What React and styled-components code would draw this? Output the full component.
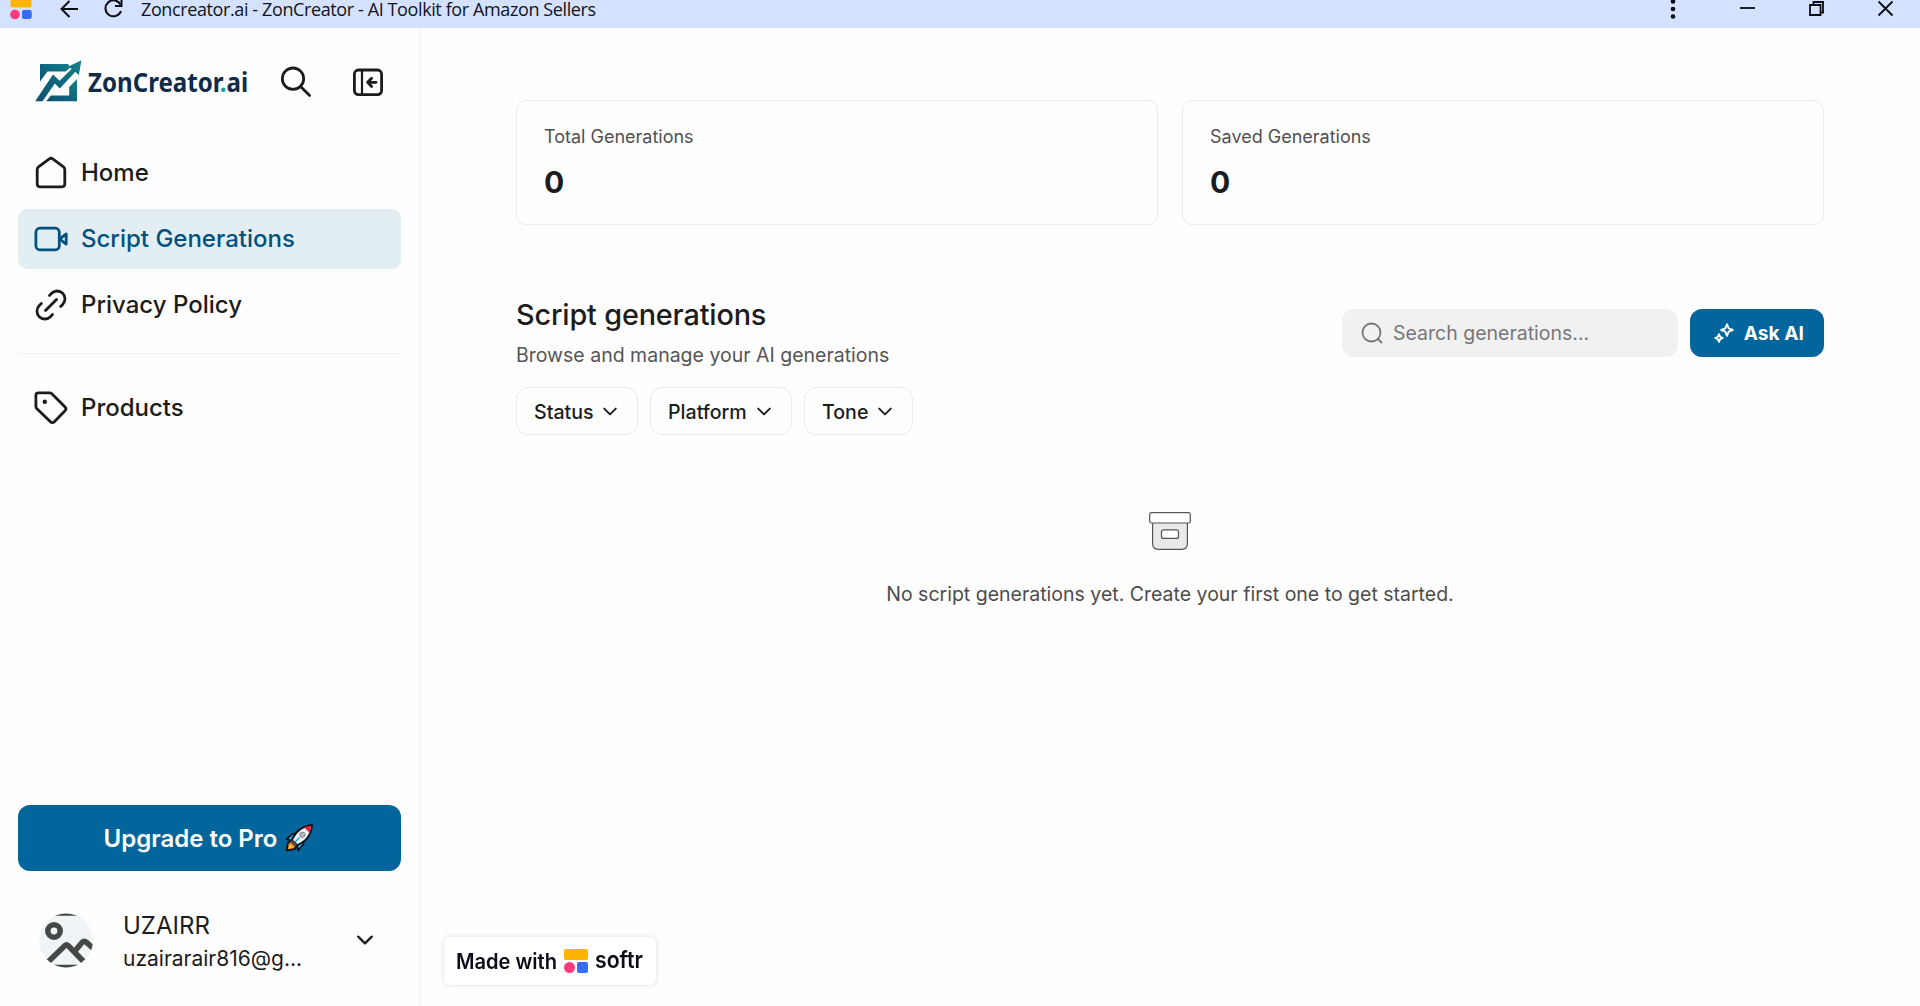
import React from "react";
import styled, { createGlobalStyle } from "styled-components";

const GlobalStyle = createGlobalStyle`
  *, *::before, *::after { box-sizing: border-box; }
  html, body, #root { height: 100%; }
  body {
    margin: 0;
    overflow: hidden;
    background: #fefefe;
    color: #1c1c1c;
    font-family: Inter, "Liberation Sans", sans-serif;
  }
  button, input { font: inherit; color: inherit; margin: 0; }
  svg { display: block; flex: none; }
`;

const Window = styled.div`
  display: flex;
  flex-direction: column;
  height: 1006px;
`;

const TitleBar = styled.header`
  display: flex;
  align-items: flex-start;
  height: 28px;
  flex: none;
  background: #d4e2ff;
  padding-left: 10px;
`;

const PageTitle = styled.span`
  margin-left: 17px;
  font: 400 18px/18px "Open Sans", "Noto Sans", sans-serif;
  letter-spacing: -0.39px;
  color: #10131c;
  white-space: nowrap;
`;

const WindowControls = styled.div`
  display: flex;
  margin-left: auto;
`;

const Body = styled.div`
  display: flex;
  flex: 1;
  min-height: 0;
`;

const Sidebar = styled.aside`
  display: flex;
  flex-direction: column;
  width: 420px;
  flex: none;
  padding: 0 18px;
  border-right: 1px solid #f1f1f1;
`;

const SidebarHeader = styled.div`
  display: flex;
  align-items: center;
  height: 70px;
  margin-top: 19px;
  padding-left: 16px;
`;

const Brand = styled.div`
  display: flex;
  align-items: center;
  width: 215px;
  flex: none;
`;

const BrandName = styled.span`
  margin-left: 6px;
  width: 161px;
  font: 700 27px/40px "Noto Sans", "Open Sans", sans-serif;
  color: #0e2c4a;
  white-space: nowrap;
  transform: scaleX(0.893);
  transform-origin: 0 50%;
`;

const BrandDot = styled.span`
  color: #11a0a5;
`;

const IconButton = styled.button`
  display: flex;
  padding: 0;
  border: 0;
  background: none;
  margin-left: ${(p) => p.$gap};
`;

const Nav = styled.nav`
  display: flex;
  flex-direction: column;
  gap: 6px;
  margin-top: 26px;
`;

const NavItem = styled.a`
  display: flex;
  align-items: center;
  gap: 12px;
  height: 60px;
  flex: none;
  padding-left: 15px;
  border-radius: 9px;
  font-size: 24px;
  font-weight: 500;
  color: ${(p) => (p.$active ? "#03517f" : "#1c1c1c")};
  background: ${(p) => (p.$active ? "#e3eef3" : "transparent")};
`;

const NavLabel = styled.span`
  padding-bottom: 1px;
`;

const Divider = styled.hr`
  width: 100%;
  height: 1px;
  flex: none;
  border: 0;
  margin: 18px 0 24px;
  background: #f0f0f0;
`;

const UpgradeButton = styled.button`
  display: flex;
  align-items: center;
  justify-content: center;
  gap: 8px;
  height: 66px;
  margin-top: auto;
  padding: 0 2px 0 0;
  border: 0;
  border-radius: 12px;
  background: #02659c;
  color: #fff;
  font-size: 24px;
  font-weight: 600;
`;

const Account = styled.div`
  display: flex;
  align-items: center;
  height: 70px;
  margin: 34px 0 31px;
  padding: 0 28px 0 21px;
`;

const AccountText = styled.div`
  display: flex;
  flex-direction: column;
  margin-left: 29px;
  margin-right: auto;
  padding-top: 3px;
`;

const AccountName = styled.span`
  font-size: 24px;
  line-height: 34px;
`;

const AccountEmail = styled.span`
  font-size: 21px;
  line-height: 32px;
`;

const Main = styled.main`
  flex: 1;
  padding: 72px 96px 0;
`;

const Stats = styled.section`
  display: grid;
  grid-template-columns: 1fr 1fr;
  gap: 24px;
`;

const StatCard = styled.div`
  height: 125px;
  padding: 23px 27px;
  border: 1px solid #ebebeb;
  border-radius: 10px;
`;

const StatLabel = styled.div`
  font-size: 18px;
  line-height: 26px;
  color: #505050;
`;

const StatValue = styled.div`
  margin-top: 11px;
  font-size: 30px;
  line-height: 42px;
  font-weight: 700;
`;

const ListHeader = styled.section`
  display: flex;
  justify-content: space-between;
  margin-top: 68px;
`;

const Heading = styled.h1`
  margin: 0;
  font-size: 28.8px;
  line-height: 44px;
  font-weight: 500;
  letter-spacing: -0.15px;
`;

const Subtitle = styled.p`
  margin: 3px 0 0;
  font-size: 19.5px;
  line-height: 30px;
  color: #555;
`;

const Filters = styled.div`
  display: flex;
  gap: 12px;
  margin-top: 17px;
`;

const FilterButton = styled.button`
  display: flex;
  align-items: center;
  justify-content: space-between;
  width: ${(p) => p.$width}px;
  height: 48px;
  padding: 1px 20px 0 17px;
  border: 1px solid #ebebeb;
  border-radius: 12px;
  background: transparent;
  font-size: 19.6px;
  font-weight: 500;
`;

const Tools = styled.div`
  display: flex;
  gap: 12px;
  margin-top: 16px;
`;

const SearchField = styled.label`
  display: flex;
  align-items: center;
  gap: 10px;
  width: 336px;
  height: 48px;
  padding-left: 19px;
  border-radius: 12px;
  background: #f1f1f1;
  color: #777;
`;

const SearchInput = styled.input`
  width: 260px;
  padding: 0;
  border: 0;
  outline: 0;
  background: none;
  font-size: 19.5px;
  &::placeholder { color: #777; opacity: 1; }
`;

const AskButton = styled.button`
  display: flex;
  align-items: center;
  justify-content: space-between;
  width: 134px;
  height: 48px;
  padding: 0 20px 0 23px;
  border: 0;
  border-radius: 12px;
  background: #02659c;
  color: #fff;
  font-size: 19.2px;
  font-weight: 700;
`;

const EmptyState = styled.section`
  display: flex;
  flex-direction: column;
  align-items: center;
  gap: 29px;
  margin-top: 77px;
  font-size: 19.5px;
  line-height: 30px;
  color: #4c4c4c;
`;

const MadeWith = styled.a`
  position: fixed;
  left: 444px;
  top: 937px;
  display: flex;
  align-items: center;
  width: 212px;
  height: 48px;
  padding-left: 12px;
  border-radius: 6px;
  background: #fff;
  box-shadow: 0 0 5px rgba(0, 0, 0, 0.14);
`;

const SoftrMark = ({ size = 24 }) => (
  <svg width={size} height={size} viewBox="0 0 24 24">
    <rect width="24" height="11" rx="2" fill="#ffb400" />
    <circle cx="5.5" cy="18.5" r="5.5" fill="#ff3b7f" />
    <rect x="13" y="13" width="11" height="11" rx="2" fill="#376df6" />
  </svg>
);

const Stroke = ({ w = 36, h = 36, sw = 2.8, children }) => (
  <svg
    width={w}
    height={h}
    viewBox={`0 0 ${w} ${h}`}
    fill="none"
    stroke="currentColor"
    strokeWidth={sw}
    strokeLinecap="round"
    strokeLinejoin="round"
  >
    {children}
  </svg>
);

const HomeIcon = () => (
  <Stroke>
    <path d="M4.2 14.6c0-1.2.4-2 1.3-2.7L16.3 3.9c1.1-.9 2.3-.9 3.4 0l10.8 8c.9.7 1.3 1.5 1.3 2.7v14.5c0 1.8-.9 2.7-2.7 2.7H6.9c-1.8 0-2.7-.9-2.7-2.7z" />
  </Stroke>
);
const VideoIcon = () => (
  <Stroke>
    <rect x="2.9" y="7.2" width="23.4" height="21.6" rx="4" />
    <path d="M26.8 17.8l6.4-4.9v10.2l-6.4-4.9z" />
  </Stroke>
);
const LinkIcon = () => (
  <Stroke>
    <path d="M12.5 23.5l11-11" />
    <path d="M16.5 8.4l2.1-2.1a7.8 7.8 0 0 1 11.1 11.1l-2.1 2.1" />
    <path d="M8.4 16.5l-2.1 2.1a7.8 7.8 0 0 0 11.1 11.1l2.1-2.1" />
  </Stroke>
);
const TagIcon = () => (
  <Stroke>
    <path d="M2.9 5.2c0-1.4.9-2.3 2.3-2.3h11.6c.8 0 1.4.2 2 .8l13 13c1.5 1.5 1.5 2.9 0 4.4L21.6 31.4c-1.5 1.5-2.9 1.5-4.4 0l-13.5-13c-.6-.6-.8-1.2-.8-2z" />
    <circle cx="11.8" cy="11.8" r="2.2" fill="currentColor" stroke="none" />
  </Stroke>
);
const Chevron = ({ w = 14, h = 9, sw = 1.9 }) => (
  <Stroke w={w} h={h} sw={sw}>
    <path d={`M1.2 1.6L${w / 2} ${h - 1.6}L${w - 1.2} 1.6`} />
  </Stroke>
);

const Logo = () => (
  <Brand>
    <svg width="48" height="44" viewBox="0 0 48 44">
      <defs>
        <linearGradient id="mark" x1="0" y1="1" x2="1" y2="0">
          <stop offset="0" stopColor="#0c4f6e" />
          <stop offset="1" stopColor="#12808c" />
        </linearGradient>
      </defs>
      <g fill="url(#mark)">
        <path d="M6 4h28l2.4 3.6-4.8 3.8H13.5L6 21.500z" />
        <path d="M43 19v22.200H12.200l4.700-5.600H35.200V27z" />
        <path d="M1.200 41.200L19 14.600l6.600 6.200L37.600 9 34.400 6.400 47.400.3 44.800 15.200l-3.400-3.400L25.800 28.400l-5-4.800L8.600 41.200z" />
      </g>
    </svg>
    <BrandName>
      ZonCreator<BrandDot>.</BrandDot>ai
    </BrandName>
  </Brand>
);

const Rocket = () => (
  <svg width="28" height="28" viewBox="0 0 28 28" strokeLinejoin="round">
    <path d="M1.800 26.500l1-7.500L8 15.800l4.500 4.500-3 4.800z" fill="#f7821b" stroke="#0b0f14" strokeWidth="1.800" />
    <path d="M3.500 24.800l1.300-4.500 3.500 3z" fill="#ffc83d" />
    <path d="M1.800 15.200l5.700-5.400 6-.8-6 8zM19 13.500l-.6 6.500-5.400 6.500-1-6z" fill="#3db8f0" stroke="#0b0f14" strokeWidth="1.800" />
    <path d="M6.800 15.800C10.500 8 17 1.800 27 1c-.6 9.400-6.500 16.600-14.800 20.200z" fill="#eef1f5" stroke="#0b0f14" strokeWidth="1.800" />
    <path d="M19.200 3.500C21.500 2.400 23.800 1.900 26.200 1.800c-.2 2.400-.8 4.700-1.800 6.900z" fill="#e8213a" />
    <path d="M7.400 16l4.700 4.700-2.300 1.900-4.600-4.700z" fill="#4b4f55" />
    <circle cx="17.400" cy="10.800" r="2.700" fill="#b4b8be" stroke="#858a91" />
    <path d="M10.300 17.700l4-4" stroke="#1aa7e8" strokeWidth="1.500" />
  </svg>
);

const Avatar = () => (
  <svg width="55" height="55" viewBox="0 0 55 55">
    <clipPath id="avatar">
      <circle cx="27" cy="27.500" r="27" />
    </clipPath>
    <g clipPath="url(#avatar)" stroke="#464848" strokeWidth="5.600" fill="none">
      <rect width="55" height="55" fill="#f1f4f6" stroke="none" />
      <path d="M0 0h55M0 54.500h55" />
      <circle cx="15" cy="18" r="6.200" />
      <path d="M9.500 48.500l16-15.600q2-2 4 0l15 15.600M35.500 38.500l7.500-9q2-2.400 4.200-.4l8.300 7.400" />
    </g>
  </svg>
);

const ArchiveBox = () => (
  <svg width="42" height="38" viewBox="0 0 42 38" stroke="#555" strokeWidth="1.200">
    <path d="M3.600 10h34.800v21.600c0 4-1.800 5.700-5.600 5.700H9.200c-3.800 0-5.600-1.700-5.600-5.700z" fill="#e9e9e9" />
    <rect x=".7" y=".7" width="40.600" height="10.300" rx="1.800" fill="#fff" />
    <rect x="12.500" y="17.800" width="17" height="8.600" rx="2" fill="#fff" />
  </svg>
);

const Sparkles = () => (
  <Stroke w={22} h={22} sw={1.9}>
    <path d="M14 2.200l1.700 4.100 4.100 1.700-4.100 1.700L14 13.800l-1.700-4.100L8.200 8l4.100-1.700z" />
    <path d="M6 12.200l1.200 2.600L9.800 16l-2.600 1.200L6 19.800l-1.200-2.600L2.200 16l2.600-1.200z" />
  </Stroke>
);

const navItems = [
  { label: "Home", Icon: HomeIcon },
  { label: "Script Generations", Icon: VideoIcon, active: true },
  { label: "Privacy Policy", Icon: LinkIcon },
];
const stats = [
  { label: "Total Generations", value: "0" },
  { label: "Saved Generations", value: "0" },
];
const filters = [
  { label: "Status", width: 122 },
  { label: "Platform", width: 142 },
  { label: "Tone", width: 109 },
];

export default function App() {
  return (
    <Window>
      <GlobalStyle />
      <TitleBar>
        <svg width="114" height="28" viewBox="0 0 114 28">
          <path d="M.5 0h21v5.500q0 2-2 2h-17q-2 0-2-2z" fill="#ffb400" />
          <circle cx="5" cy="14.500" r="4.800" fill="#ff3b7f" />
          <rect x="12" y="10" width="9.700" height="9" rx="2" fill="#376df6" />
          <g fill="none" stroke="#0b0d14" strokeWidth="2">
            <path d="M68 9H52M59.500 1L51.500 9l8 8" />
            <path d="M110.500 4.500A8 8 0 1 0 111 11" />
            <path d="M111.500 0v6h-6.500" />
          </g>
        </svg>
        <PageTitle>Zoncreator.ai - ZonCreator - AI Toolkit for Amazon Sellers</PageTitle>
        <WindowControls>
          <svg width="260" height="28" viewBox="1660 0 260 28" fill="none" stroke="#0b0d14" strokeWidth="1.800">
            <g fill="#0b0d14" stroke="none">
              <circle cx="1673" cy="1.500" r="2.300" />
              <circle cx="1673" cy="9" r="2.300" />
              <circle cx="1673" cy="16.500" r="2.300" />
            </g>
            <path d="M1740 8h15" />
            <path d="M1810 5h10.500v10H1810zM1813.500 4.500V2H1823v10.500h-2.500" />
            <path d="M1878.500 1.500l14 14M1892.500 1.500l-14 14" />
          </svg>
        </WindowControls>
      </TitleBar>
      <Body>
        <Sidebar>
          <SidebarHeader>
            <Logo />
            <IconButton $gap="30px" aria-label="Search">
              <Stroke w={34} h={34}>
                <circle cx="14" cy="13.700" r="10.700" />
                <path d="M21.800 21.800l8.800 8.800" />
              </Stroke>
            </IconButton>
            <IconButton $gap="38px" aria-label="Collapse sidebar">
              <Stroke w={34} h={32}>
                <rect x="3.400" y="4" width="27.200" height="24.600" rx="4" />
                <path d="M11 4.500v24" strokeWidth="2.200" />
                <path d="M25 16.300h-7.500M20.600 12.200L16.600 16.300l4 4.100" />
              </Stroke>
            </IconButton>
          </SidebarHeader>
          <Nav>
            {navItems.map(({ label, Icon, active }) => (
              <NavItem key={label} $active={active}>
                <Icon />
                <NavLabel>{label}</NavLabel>
              </NavItem>
            ))}
          </Nav>
          <Divider />
          <NavItem>
            <TagIcon />
            <NavLabel>Products</NavLabel>
          </NavItem>
          <UpgradeButton>
            Upgrade to Pro
            <Rocket />
          </UpgradeButton>
          <Account>
            <Avatar />
            <AccountText>
              <AccountName>UZAIRR</AccountName>
              <AccountEmail>uzairarair816@g...</AccountEmail>
            </AccountText>
            <Chevron w={16} h={10} sw={2.2} />
          </Account>
        </Sidebar>
        <Main>
          <Stats>
            {stats.map((s) => (
              <StatCard key={s.label}>
                <StatLabel>{s.label}</StatLabel>
                <StatValue>{s.value}</StatValue>
              </StatCard>
            ))}
          </Stats>
          <ListHeader>
            <div>
              <Heading>Script generations</Heading>
              <Subtitle>Browse and manage your AI generations</Subtitle>
              <Filters>
                {filters.map((f) => (
                  <FilterButton key={f.label} $width={f.width}>
                    {f.label}
                    <Chevron />
                  </FilterButton>
                ))}
              </Filters>
            </div>
            <Tools>
              <SearchField>
                <Stroke w={22} h={22} sw={1.8}>
                  <circle cx="10.500" cy="10.500" r="9" />
                  <path d="M17 17l3.500 3.500" />
                </Stroke>
                <SearchInput placeholder="Search generations..." />
              </SearchField>
              <AskButton>
                <Sparkles />
                Ask AI
              </AskButton>
            </Tools>
          </ListHeader>
          <EmptyState>
            <ArchiveBox />
            No script generations yet. Create your first one to get started.
          </EmptyState>
        </Main>
      </Body>
      <MadeWith>
        <svg width="190" height="40" viewBox="0 0 190 40" fontFamily='Inter, "Liberation Sans", sans-serif' fontSize="21" fontWeight="600" fill="#0c0c18">
          <text x="0" y="28" textLength="101" lengthAdjust="spacingAndGlyphs">Made with</text>
          <g transform="translate(108 8)">
            <SoftrMark />
          </g>
          <text x="139" y="27" fontSize="23" textLength="48" lengthAdjust="spacingAndGlyphs">softr</text>
        </svg>
      </MadeWith>
    </Window>
  );
}
